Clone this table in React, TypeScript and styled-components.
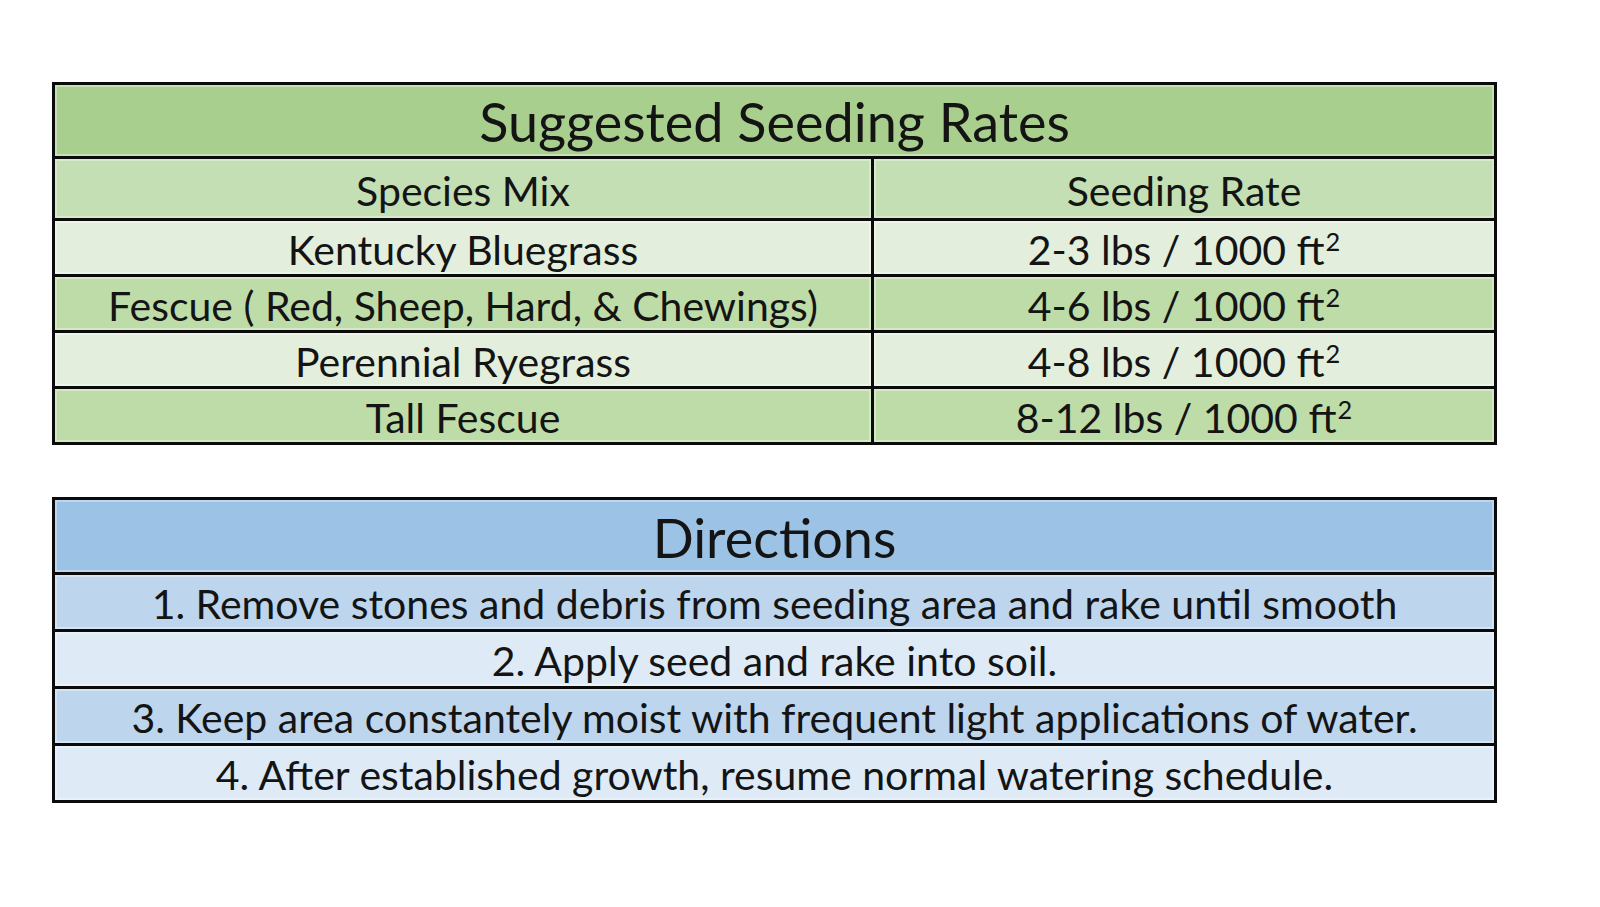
import React from "react";
import styled, { createGlobalStyle } from "styled-components";

const Global = createGlobalStyle`
  html, body { margin: 0; padding: 0; background: #ffffff; }
  body { font-family: "Lato", "Open Sans", sans-serif; color: #111; }
`;

const Page = styled.div`
  width: 1600px;
  height: 907px;
  padding: 82px 0 0 52px;
  box-sizing: border-box;
  display: flex;
  flex-direction: column;
  gap: 52px;
`;

const Table = styled.div<{ $cols: string }>`
  width: 1445px;
  box-sizing: border-box;
  display: grid;
  grid-template-columns: ${(p) => p.$cols};
  gap: 3px;
  padding: 3px;
  background: #0b0b0b;
`;

const Cell = styled.div<{ $bg: string; $h: number; $span?: boolean; $size?: number }>`
  grid-column: ${(p) => (p.$span ? "1 / -1" : "auto")};
  height: ${(p) => p.$h}px;
  background: ${(p) => p.$bg};
  display: flex;
  align-items: center;
  justify-content: center;
  font-size: ${(p) => p.$size ?? 41}px;
  line-height: 1;
  color: #141414;
  white-space: nowrap;
  padding-top: 3px;
  box-sizing: border-box;
  box-shadow: inset 0 0 0 2px rgba(255, 255, 255, 0.35);
`;

const Sup = styled.sup`
  font-size: 0.62em;
  line-height: 0;
  position: relative;
  top: -0.3em;
  margin-left: 1px;
`;

const G = {
  title: "#a9cf8e",
  head: "#c4dfb3",
  light: "#e3efdc",
  mid: "#bedca8",
};
const B = {
  title: "#9cc2e6",
  mid: "#bdd6ee",
  light: "#deebf7",
};

const rates: [string, string, string][] = [
  ["Kentucky Bluegrass", "2-3 lbs / 1000 ft", G.light],
  ["Fescue ( Red, Sheep, Hard, & Chewings)", "4-6 lbs / 1000 ft", G.mid],
  ["Perennial Ryegrass", "4-8 lbs / 1000 ft", G.light],
  ["Tall Fescue", "8-12 lbs / 1000 ft", G.mid],
];

const directions: [string, string][] = [
  ["1. Remove stones and debris from seeding area and rake until smooth", B.mid],
  ["2. Apply seed and rake into soil.", B.light],
  ["3. Keep area constantely moist with frequent light applications of water.", B.mid],
  ["4. After established growth, resume normal watering schedule.", B.light],
];

export default function App() {
  return (
    <>
      <Global />
      <Page>
        <Table $cols="816px 1fr">
          <Cell $bg={G.title} $h={71} $span $size={54}>
            Suggested Seeding Rates
          </Cell>
          <Cell $bg={G.head} $h={59}>Species Mix</Cell>
          <Cell $bg={G.head} $h={59}>Seeding Rate</Cell>
          {rates.map(([name, rate, bg]) => (
            <React.Fragment key={name}>
              <Cell $bg={bg} $h={53}>{name}</Cell>
              <Cell $bg={bg} $h={53}>
                {rate}
                <Sup>2</Sup>
              </Cell>
            </React.Fragment>
          ))}
        </Table>
        <Table $cols="1fr">
          <Cell $bg={B.title} $h={72} $size={54}>Directions</Cell>
          {directions.map(([text, bg]) => (
            <Cell key={text} $bg={bg} $h={54}>{text}</Cell>
          ))}
        </Table>
      </Page>
    </>
  );
}
